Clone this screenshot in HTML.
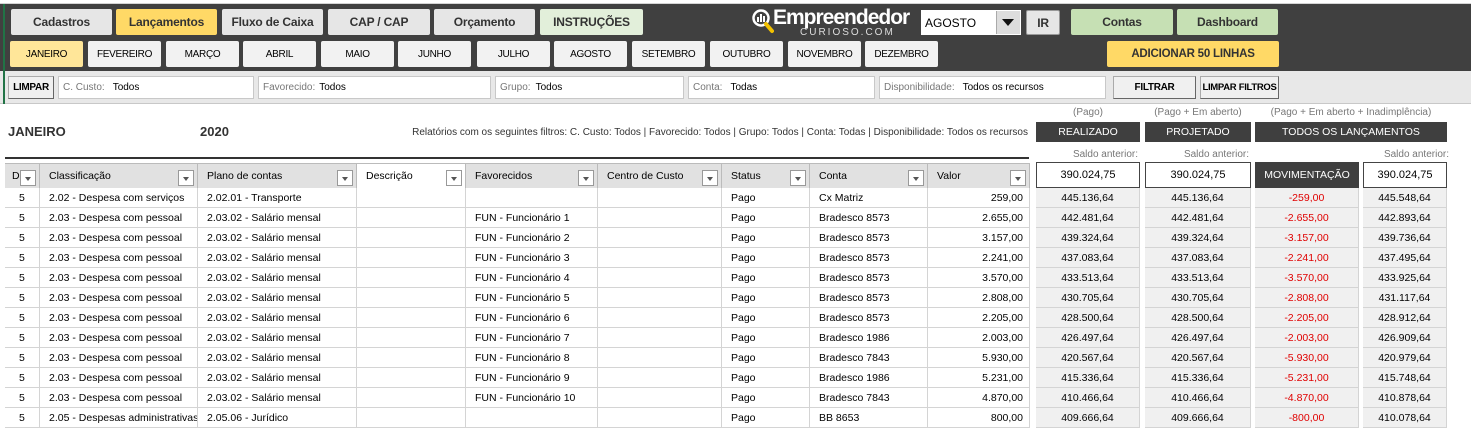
<!DOCTYPE html>
<html><head><meta charset="utf-8"><style>
*{box-sizing:border-box;margin:0;padding:0}
body{width:1471px;height:425px;overflow:hidden;background:#fff;font-family:"Liberation Sans",sans-serif;font-size:10.5px;color:#000;position:relative}
.a{position:absolute}
.btn{position:absolute;display:flex;align-items:center;justify-content:center;border-radius:2px;font-size:12px;font-weight:bold;color:#333;background:#e6e6e6;white-space:nowrap;letter-spacing:-0.2px}
.m{position:absolute;top:41px;height:26px;width:73px;background:#f2f2f2;display:flex;align-items:center;justify-content:center;font-size:10px;border-radius:2px;letter-spacing:-0.3px}
.f{position:absolute;top:76px;height:23px;background:#fff;border:1px solid #c8c8c8;display:flex;align-items:center;padding-left:4px;font-size:10px}
.f span{color:#777;margin-right:8px}
.gb{position:absolute;top:76px;height:23px;background:#f0f0f0;border:1px solid #aaa;border-right-color:#666;border-bottom-color:#666;display:flex;align-items:center;justify-content:center;font-size:10px;font-weight:bold;white-space:nowrap;letter-spacing:-0.3px}
.hd{position:absolute;top:163px;height:25px;background:#e1e1e1;border-right:1px solid #bbb;border-top:1px solid #bbb;display:flex;align-items:center;padding-left:9px;font-size:10.5px}
.dd{position:absolute;right:3px;top:6px;width:16px;height:16px;border:1px solid #999;background:#fff}
.dd:after{content:"";position:absolute;left:4px;top:6px;border:3.5px solid transparent;border-top:4px solid #555}
.c{position:absolute;height:20px;border-right:1px solid #d4d4d4;border-bottom:1px solid #d4d4d4;display:flex;align-items:center;padding-left:9px;white-space:nowrap;overflow:hidden;font-size:10.5px}
.r{justify-content:flex-end;padding-right:6px}
.ct{justify-content:center;padding:0}
.dk{position:absolute;background:#3f3f3f;color:#fff;display:flex;align-items:center;justify-content:center;font-size:10.5px}
.lbl{position:absolute;color:#777;font-size:10px;text-align:center}
.sb{position:absolute;top:162px;height:26px;border:1px solid #444;background:#fff;display:flex;align-items:center;justify-content:center;font-size:11px}
</style></head><body>
<div class="a" style="left:0;top:0;width:1471px;height:4px;background:#fff;border-bottom:1px solid #d4d4d4"></div>
<div class="a" style="left:0;top:4px;width:1471px;height:67px;background:#404040"></div>
<div class="a" style="left:0;top:71px;width:1471px;height:33px;background:#e8e8e8;border-bottom:1px solid #c8c8c8"></div>
<div class="a" style="left:3px;top:4px;width:2px;height:100px;background:#217346"></div>

<div class="btn" style="left:11px;top:9px;width:101px;height:26px">Cadastros</div>
<div class="btn" style="left:116px;top:9px;width:101px;height:26px;background:#ffd966">Lançamentos</div>
<div class="btn" style="left:222px;top:9px;width:101px;height:26px">Fluxo de Caixa</div>
<div class="btn" style="left:328px;top:9px;width:102px;height:26px">CAP / CAP</div>
<div class="btn" style="left:434px;top:9px;width:101px;height:26px">Orçamento</div>
<div class="btn" style="left:540px;top:9px;width:103px;height:26px;background:#e2efda">INSTRUÇÕES</div>

<svg class="a" style="left:752px;top:9px" width="22" height="25" viewBox="0 0 22 25"><circle cx="9" cy="9" r="7.5" fill="none" stroke="#fff" stroke-width="2.5"/><rect x="5" y="8" width="2" height="5" fill="#fff"/><rect x="8" y="5" width="2" height="8" fill="#fff"/><rect x="11" y="7" width="2" height="6" fill="#fff"/><line x1="14" y1="15" x2="20" y2="22" stroke="#f2c100" stroke-width="4" stroke-linecap="round"/></svg>
<div class="a" style="left:773px;top:6px;color:#fff;font-weight:bold;font-size:21px;letter-spacing:-1px">Empreendedor</div>
<div class="a" style="left:800px;top:27px;color:#ddd;font-size:10px;letter-spacing:2px">CURIOSO.COM</div>

<div class="a" style="left:921px;top:10px;width:100px;height:25px;background:#fff;font-size:12px;display:flex;align-items:center;padding-left:4px">AGOSTO</div>
<div class="a" style="left:996px;top:11px;width:24px;height:23px;background:#ddd;border-left:1px solid #aaa"></div>
<div class="a" style="left:1002px;top:19px;border:6px solid transparent;border-top:7px solid #111"></div>
<div class="btn" style="left:1026px;top:10px;width:34px;height:25px;border:1px solid #999;font-size:12px">IR</div>
<div class="btn" style="left:1071px;top:9px;width:102px;height:26px;background:#c6e0b4">Contas</div>
<div class="btn" style="left:1177px;top:9px;width:101px;height:26px;background:#c6e0b4">Dashboard</div>

<div class="m" style="left:10px;background:#ffe699">JANEIRO</div>
<div class="m" style="left:88px">FEVEREIRO</div>
<div class="m" style="left:166px">MARÇO</div>
<div class="m" style="left:243px">ABRIL</div>
<div class="m" style="left:321px">MAIO</div>
<div class="m" style="left:398px">JUNHO</div>
<div class="m" style="left:477px">JULHO</div>
<div class="m" style="left:554px">AGOSTO</div>
<div class="m" style="left:632px">SETEMBRO</div>
<div class="m" style="left:710px">OUTUBRO</div>
<div class="m" style="left:788px">NOVEMBRO</div>
<div class="m" style="left:865px">DEZEMBRO</div>
<div class="btn" style="left:1107px;top:41px;width:172px;height:26px;background:#ffd966;font-size:11.5px">ADICIONAR 50 LINHAS</div>

<div class="gb" style="left:8px;width:46px">LIMPAR</div>
<div class="f" style="left:58px;width:196px"><span>C. Custo:</span>Todos</div>
<div class="f" style="left:258px;width:233px"><span style="margin-right:4px">Favorecido:</span>Todos</div>
<div class="f" style="left:495px;width:189px"><span style="margin-right:5px">Grupo:</span>Todos</div>
<div class="f" style="left:688px;width:187px"><span>Conta:</span>Todas</div>
<div class="f" style="left:879px;width:227px"><span>Disponibilidade:</span>Todos os recursos</div>
<div class="gb" style="left:1113px;width:83px">FILTRAR</div>
<div class="gb" style="left:1200px;width:79px;font-size:9.5px">LIMPAR FILTROS</div>

<div class="a" style="left:8px;top:124px;font-weight:bold;font-size:13px;color:#333">JANEIRO</div>
<div class="a" style="left:200px;top:124px;font-weight:bold;font-size:13px;color:#333">2020</div>
<div class="a" style="right:443px;top:127px;font-size:10px;color:#333;white-space:nowrap">Relatórios com os seguintes filtros: C. Custo: Todos | Favorecido: Todos | Grupo: Todos | Conta: Todas | Disponibilidade: Todos os recursos</div>
<div class="a" style="left:5px;top:157px;width:1024px;height:2px;background:#333"></div>

<div class="lbl" style="left:1036px;top:107px;width:104px">(Pago)</div>
<div class="lbl" style="left:1145px;top:107px;width:106px">(Pago + Em aberto)</div>
<div class="lbl" style="left:1255px;top:107px;width:192px">(Pago + Em aberto + Inadimplência)</div>
<div class="dk" style="left:1036px;top:122px;width:104px;height:20px">REALIZADO</div>
<div class="dk" style="left:1145px;top:122px;width:106px;height:20px">PROJETADO</div>
<div class="dk" style="left:1255px;top:122px;width:192px;height:20px">TODOS OS LANÇAMENTOS</div>
<div class="lbl" style="left:1036px;top:149px;width:104px;text-align:right;padding-right:2px">Saldo anterior:</div>
<div class="lbl" style="left:1145px;top:149px;width:106px;text-align:right;padding-right:2px">Saldo anterior:</div>
<div class="lbl" style="left:1363px;top:149px;width:86px;text-align:right">Saldo anterior:</div>
<div class="sb" style="left:1036px;width:104px">390.024,75</div>
<div class="sb" style="left:1145px;width:106px">390.024,75</div>
<div class="dk" style="left:1255px;top:162px;width:104px;height:26px">MOVIMENTAÇÃO</div>
<div class="sb" style="left:1363px;width:84px">390.024,75</div>

<div class="hd" style="left:5px;width:35px;padding-left:7px">D<div class="dd"></div></div>
<div class="hd" style="left:40px;width:158px">Classificação<div class="dd"></div></div>
<div class="hd" style="left:198px;width:159px">Plano de contas<div class="dd"></div></div>
<div class="hd" style="left:357px;width:109px;background:#fff">Descrição<div class="dd"></div></div>
<div class="hd" style="left:466px;width:132px">Favorecidos<div class="dd"></div></div>
<div class="hd" style="left:598px;width:124px">Centro de Custo<div class="dd"></div></div>
<div class="hd" style="left:722px;width:88px">Status<div class="dd"></div></div>
<div class="hd" style="left:810px;width:118px">Conta<div class="dd"></div></div>
<div class="hd" style="left:928px;width:102px">Valor<div class="dd"></div></div>

<div id="rows"></div>
<script>
var d=[
["2.02 - Despesa com serviços","2.02.01 - Transporte","","Cx Matriz","259,00","445.136,64","445.548,64"],
["2.03 - Despesa com pessoal","2.03.02 - Salário mensal","FUN - Funcionário 1","Bradesco 8573","2.655,00","442.481,64","442.893,64"],
["2.03 - Despesa com pessoal","2.03.02 - Salário mensal","FUN - Funcionário 2","Bradesco 8573","3.157,00","439.324,64","439.736,64"],
["2.03 - Despesa com pessoal","2.03.02 - Salário mensal","FUN - Funcionário 3","Bradesco 8573","2.241,00","437.083,64","437.495,64"],
["2.03 - Despesa com pessoal","2.03.02 - Salário mensal","FUN - Funcionário 4","Bradesco 8573","3.570,00","433.513,64","433.925,64"],
["2.03 - Despesa com pessoal","2.03.02 - Salário mensal","FUN - Funcionário 5","Bradesco 8573","2.808,00","430.705,64","431.117,64"],
["2.03 - Despesa com pessoal","2.03.02 - Salário mensal","FUN - Funcionário 6","Bradesco 8573","2.205,00","428.500,64","428.912,64"],
["2.03 - Despesa com pessoal","2.03.02 - Salário mensal","FUN - Funcionário 7","Bradesco 1986","2.003,00","426.497,64","426.909,64"],
["2.03 - Despesa com pessoal","2.03.02 - Salário mensal","FUN - Funcionário 8","Bradesco 7843","5.930,00","420.567,64","420.979,64"],
["2.03 - Despesa com pessoal","2.03.02 - Salário mensal","FUN - Funcionário 9","Bradesco 1986","5.231,00","415.336,64","415.748,64"],
["2.03 - Despesa com pessoal","2.03.02 - Salário mensal","FUN - Funcionário 10","Bradesco 7843","4.870,00","410.466,64","410.878,64"],
["2.05 - Despesas administrativas","2.05.06 - Jurídico","","BB 8653","800,00","409.666,64","410.078,64"]];
var h="";
d.forEach(function(r,i){var y=188+i*20;
function c(x,w,t,cl,st){h+='<div class="c '+(cl||"")+'" style="left:'+x+'px;top:'+y+'px;width:'+w+'px;'+(st||"")+'">'+t+'</div>';}
c(5,35,"5","","padding-left:14px");c(40,158,r[0]);c(198,159,r[1]);c(357,109,"");c(466,132,r[2]);c(598,124,"");c(722,88,"Pago");c(810,118,r[3]);c(928,102,r[4],"r");
c(1036,104,r[5],"ct","background:#f0f0f0");c(1145,106,r[5],"ct","background:#f0f0f0");c(1255,104,"-"+r[4],"ct","background:#f0f0f0;color:#e00000");c(1363,84,r[6],"ct","background:#f0f0f0");
});
document.getElementById("rows").innerHTML=h;
</script>
</body></html>
